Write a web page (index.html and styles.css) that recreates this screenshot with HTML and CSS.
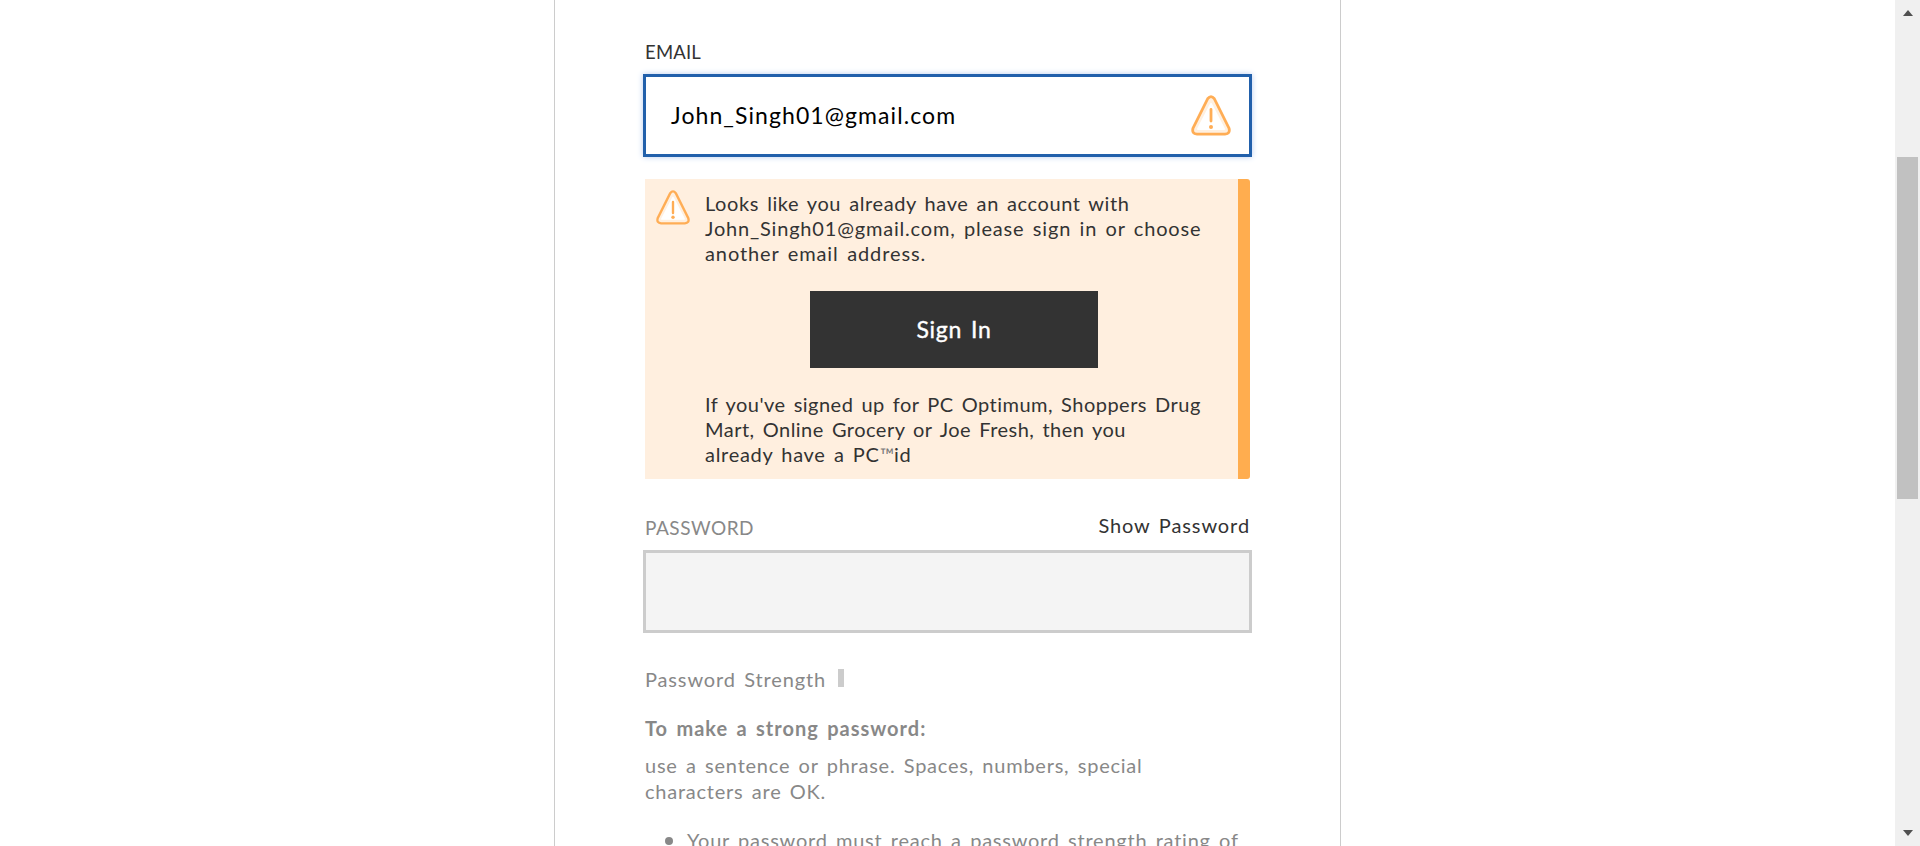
FILE: index.html
```html
<!DOCTYPE html>
<html lang="en">
<head>
<meta charset="utf-8">
<title>Create account</title>
<link rel="stylesheet" href="styles.css">
</head>
<body>
<main class="page">
  <section class="card">
    <label class="label label-email">EMAIL</label>
    <div class="field field-active">
      <span class="value">John_Singh01@gmail.com</span>
      <svg class="warn-field" viewBox="0 0 40 41"><path class="tri" d="M16.700 3.700Q20-.6 23.300 3.700L38 33.200Q39.500 38.800 34 39.200H6Q.5 38.800 2 33.200Z"/><path class="core" d="M20 9L33 34H7Z"/><path class="mark" d="M20 14.500V26"/><circle class="dot" cx="20" cy="32" r="2"/></svg>
    </div>
    <div class="alert">
      <svg class="warn-alert" viewBox="0 0 40 41"><path class="tri" d="M16.700 3.700Q20-.6 23.300 3.700L38 33.200Q39.500 38.800 34 39.200H6Q.5 38.800 2 33.200Z"/><path class="core" d="M20 9L33 34H7Z"/><path class="mark" d="M20 14V27"/><circle class="dot" cx="20" cy="32" r="2"/></svg>
      <div class="alert-body">
        <p class="text"><span class="line looks">Looks like you already have an account with</span><span class="line address">John_Singh01@gmail.com, please sign in or choose</span><span class="line another">another email address.</span></p>
        <div class="button">Sign In</div>
        <p class="text"><span class="line signed">If you've signed up for PC Optimum, Shoppers Drug</span><span class="line signed">Mart, Online Grocery or Joe Fresh, then you</span><span class="line already">already have a PC<span class="tm">™</span>id</span></p>
      </div>
    </div>
    <div class="password-head"><label class="label muted">PASSWORD</label><span class="show">Show Password</span></div>
    <div class="field field-empty"></div>
    <div class="strength"><span>Password Strength</span><span class="meter"></span></div>
    <p class="tip-title">To make a strong password:</p>
    <p class="tip"><span class="line">use a sentence or phrase. Spaces, numbers, special</span><span class="line">characters are OK.</span></p>
    <div class="rule"><span class="bullet"></span><span>Your password must reach a password strength rating of</span></div>
  </section>
</main>
<aside class="scrollbar"><span class="arrow-up"></span><span class="thumb"></span><span class="arrow-down"></span></aside>
</body>
</html>
```
FILE: styles.css
```css
* { box-sizing: border-box; }
body { margin: 0; height: 846px; display: flex; overflow: hidden; background: #fff; color: #333; font: 20px/25px Lato, sans-serif; word-spacing: 2.5px; }
p { margin: 0; }
.page { flex: 1; display: flex; padding-left: 554px; overflow: hidden; }
.card { width: 787px; height: 870px; padding: 40px 90px 0; border: solid #ccc; border-width: 0 1px; }
.label { display: block; font-size: 18.5px; line-height: 24px; letter-spacing: .2px; }
.field { height: 83px; margin: 0 -2px; border: 3px solid #ccc; background: #f4f4f4; }
.field-active { display: flex; align-items: center; justify-content: space-between; margin-top: 10px; padding: 0 18px 0 25px; border-color: #2160ab; background: #fff; box-shadow: 0 0 6px #b9cdf0; color: #000; }
.value { font-size: 23px; letter-spacing: 1.08px; }
.warn-field { width: 40px; height: 41px; }
.tri { fill: #fff0e0; stroke: #ffad55; stroke-width: 2.8; }
.core { fill: #fff; stroke: #fff; stroke-width: 2; stroke-linejoin: round; }
.mark { stroke: #ffad55; stroke-width: 2.8; stroke-linecap: round; }
.dot { fill: #ffad55; }
.alert { display: flex; height: 300px; margin-top: 22px; padding: 12px 0 0 11px; background: #ffefdf; border-right: 12px solid #ffad4f; border-radius: 0 3px 3px 0; }
.warn-alert { width: 34px; height: 35px; flex: none; margin: -1px 15px 0 0; }
.alert-body { flex: 1; }
.line { display: block; width: max-content; white-space: nowrap; }
.looks { letter-spacing: .58px; }
.address { letter-spacing: .81px; }
.another { letter-spacing: .89px; }
.signed { letter-spacing: .48px; }
.already { letter-spacing: .7px; }
.button { display: flex; align-items: center; justify-content: center; width: 288px; height: 77px; margin: 25px 0 24px 105px; background: #333; color: #fff; font-size: 23px; letter-spacing: .7px; -webkit-text-stroke: .4px #fff; }
.tm { font-size: 19px; line-height: 1; letter-spacing: 0; color: #777; }
.password-head { display: flex; justify-content: space-between; height: 36px; margin-top: 35px; }
.muted { margin-top: 2px; font-size: 19px; letter-spacing: .51px; color: #888; }
.show { margin-top: -1px; letter-spacing: .9px; }
.strength, .tip-title, .tip, .rule { color: #888; white-space: nowrap; }
.strength { display: flex; margin-top: 34px; letter-spacing: .86px; }
.meter { width: 6px; height: 18px; margin: 2px 0 0 12px; background: #ccc; }
.tip-title { margin-top: 24px; font-weight: 700; letter-spacing: 1px; }
.tip { margin-top: 11px; line-height: 26px; letter-spacing: .76px; }
.rule { display: flex; margin-top: 24px; padding-left: 20px; letter-spacing: .76px; }
.bullet { width: 8px; height: 8px; margin: 9px 14px 0 0; border-radius: 50%; background: #888; }
.scrollbar { display: flex; flex-direction: column; align-items: center; width: 25px; background: #f0f0f0; }
.arrow-up { margin-top: 10px; border: solid transparent; border-width: 0 5.5px 6px; border-bottom-color: #505050; }
.thumb { width: 21px; height: 342px; margin-top: 141px; background: #c1c1c1; }
.arrow-down { margin-top: 331px; border: solid transparent; border-width: 6px 5.5px 0; border-top-color: #505050; }
```
